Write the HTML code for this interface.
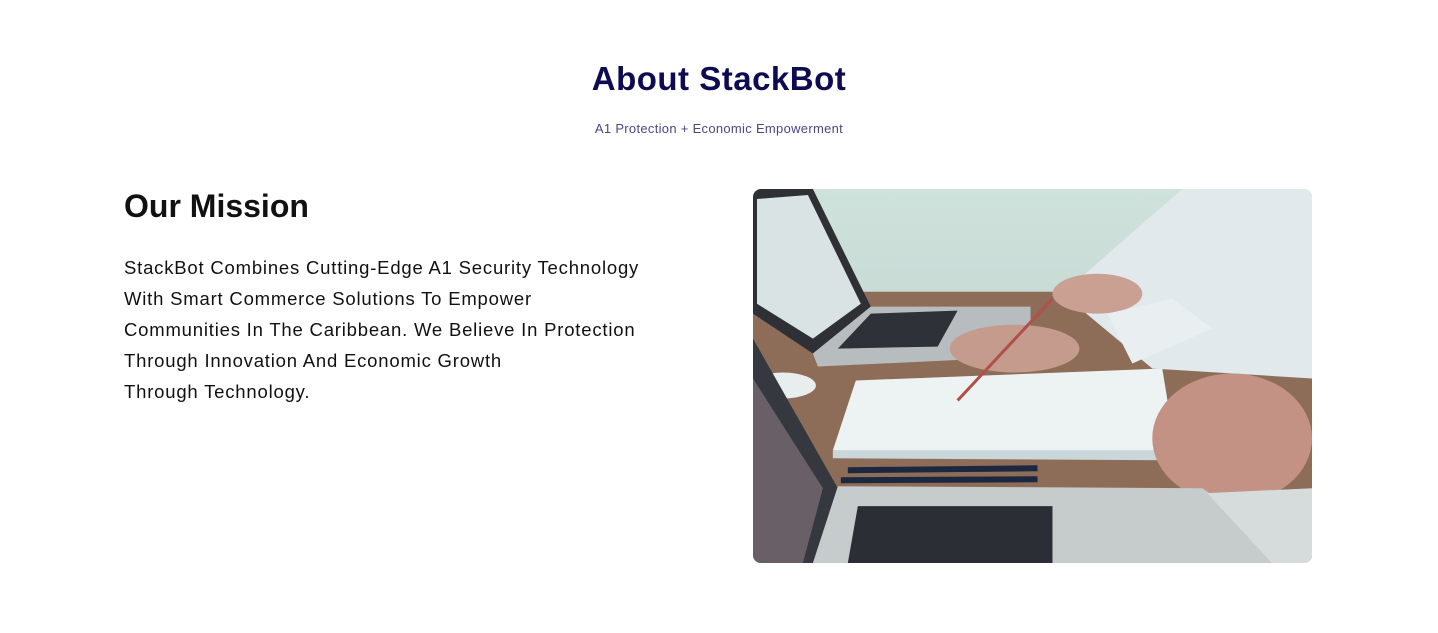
<!DOCTYPE html>
<html><head><meta charset="utf-8"><style>
html,body{margin:0;padding:0;background:#fff;width:1438px;height:633px;overflow:hidden;font-family:"Liberation Sans",sans-serif}
h1{position:absolute;top:60px;left:0;width:1438px;text-align:center;margin:0;font-size:33px;font-weight:700;color:#0e0b52;letter-spacing:0.5px}
.sub{position:absolute;top:121px;left:0;width:1438px;text-align:center;font-size:13px;color:#4b4880;letter-spacing:0.3px}
h2{position:absolute;top:188px;left:124px;margin:0;font-size:32px;font-weight:700;color:#111}
p{position:absolute;top:252px;left:124px;margin:0;white-space:nowrap;font-size:18.5px;line-height:31px;color:#111;letter-spacing:0.8px}
.img{position:absolute;left:753px;top:189px;width:559px;height:374px;border-radius:8px;overflow:hidden}
</style></head><body>
<h1>About StackBot</h1>
<div class="sub">A1 Protection + Economic Empowerment</div>
<h2>Our Mission</h2>
<p>StackBot Combines Cutting-Edge A1 Security Technology<br>With Smart Commerce Solutions To Empower<br>Communities In The Caribbean. We Believe In Protection<br>Through Innovation And Economic Growth<br>Through Technology.</p>
<div class="img"><svg width="559" height="374" viewBox="0 0 560 375" preserveAspectRatio="none">
<defs><linearGradient id="w" x1="0" y1="0" x2="0" y2="1"><stop offset="0" stop-color="#cfe2dc"/><stop offset="1" stop-color="#b7c9c4"/></linearGradient></defs>
<rect width="560" height="375" fill="url(#w)"/>
<rect y="103" width="560" height="272" fill="#8d6d58"/>
<polygon points="310,105 430,0 560,0 560,190 400,180" fill="#e2e9ec"/>
<polygon points="0,0 60,0 118,118 60,165 0,125" fill="#2e3036"/>
<polygon points="4,10 55,6 108,115 60,150 4,115" fill="#d9e3e4"/>
<polygon points="60,165 118,118 278,118 278,168 65,178" fill="#b7bdbe"/>
<polygon points="85,160 118,125 205,122 185,158" fill="#2e3138"/>
<ellipse cx="30" cy="197" rx="33" ry="13" fill="#e8eeee"/>
<polygon points="80,262 103,192 410,180 425,272" fill="#edf3f2"/>
<polygon points="80,262 420,262 425,272 80,270" fill="#c9d6da"/>
<ellipse cx="262" cy="160" rx="65" ry="24" fill="#c59b8d"/>
<ellipse cx="345" cy="105" rx="45" ry="20" fill="#c9a092"/>
<polygon points="355,125 420,110 460,140 380,175" fill="#e9eff1"/>
<line x1="205" y1="212" x2="300" y2="110" stroke="#b0504a" stroke-width="3"/>
<ellipse cx="480" cy="250" rx="80" ry="65" fill="#c49284"/>
<polygon points="0,150 85,300 60,375 0,375" fill="#35383f"/>
<polygon points="0,190 70,300 50,375 0,375" fill="#8a7a82" opacity="0.6"/>
<line x1="95" y1="282" x2="285" y2="280" stroke="#1c2740" stroke-width="6"/>
<line x1="88" y1="292" x2="285" y2="291" stroke="#1c2740" stroke-width="6"/>
<polygon points="85,298 450,300 560,375 60,375" fill="#c6cbcc"/>
<polygon points="105,318 300,318 300,375 95,375" fill="#2b2e35"/>
<polygon points="455,305 560,300 560,375 520,375" fill="#d6dcdc"/>
</svg></div>
</body></html>
